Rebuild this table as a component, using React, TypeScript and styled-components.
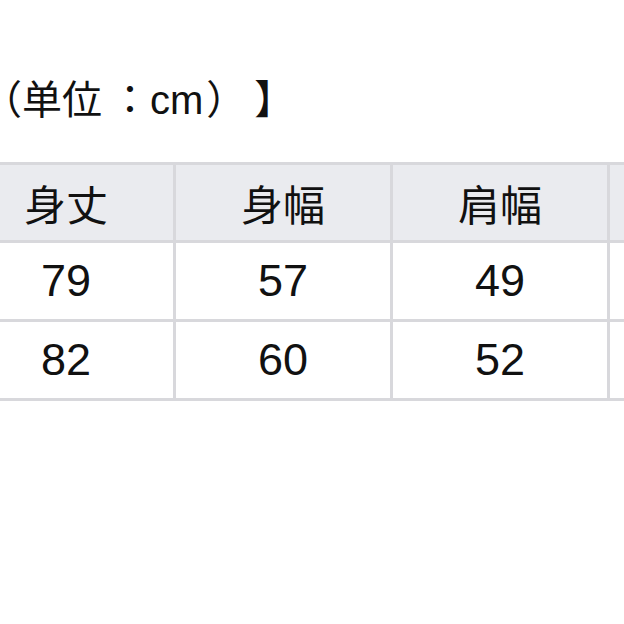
import React from 'react'
import styled, { createGlobalStyle } from 'styled-components'

const GlobalStyle = createGlobalStyle`
  html, body {
    margin: 0;
    padding: 0;
    background: #ffffff;
    overflow: hidden;
  }
  body {
    width: 624px;
    height: 624px;
    font-family: "Liberation Sans", "Noto Sans CJK SC", sans-serif;
    color: #111111;
  }
`

const Page = styled.div`
  display: flex;
  flex-direction: column;
  padding-top: 76px;
  margin-left: -44px;
`

const Caption = styled.div`
  font-family: "Liberation Sans", "Noto Sans CJK JP", sans-serif;
  font-size: 40px;
  line-height: 48px;
  margin-left: 26px;
  white-space: nowrap;
  margin-bottom: 38px;
`

const Punct = styled.span<{ $before?: number }>`
  display: inline-block;
  margin-left: ${(p) => p.$before ?? 0}px;
`

const Table = styled.table`
  border-collapse: collapse;
  table-layout: fixed;
  width: 868px;
`

const HeadCell = styled.th`
  background: #eaebef;
  font-weight: 400;
  font-size: 42px;
  height: 75px;
  padding: 0;
  border: 3px solid #d8d8dc;
  text-align: center;
  font-family: "Noto Sans CJK SC", sans-serif;
`

const Cell = styled.td`
  font-size: 45px;
  height: 76px;
  padding: 0;
  border: 3px solid #d8d8dc;
  text-align: center;
  background: #ffffff;
`

const heads = ['身丈', '身幅', '肩幅', '袖丈']
const rows = [
  ['79', '57', '49', '60'],
  ['82', '60', '52', '61'],
]

export default function App() {
  return (
    <>
      <GlobalStyle />
      <Page>
        <Caption>
          （单位<Punct $before={8}>：</Punct>cm<Punct $before={3}>）</Punct>
          <Punct $before={8}>】</Punct>
        </Caption>
        <Table>
          <colgroup>
            {heads.map((h) => (
              <col key={h} style={{ width: 217 }} />
            ))}
          </colgroup>
          <thead>
            <tr>
              {heads.map((h) => (
                <HeadCell key={h}>{h}</HeadCell>
              ))}
            </tr>
          </thead>
          <tbody>
            {rows.map((r, i) => (
              <tr key={i}>
                {r.map((v, j) => (
                  <Cell key={j}>{v}</Cell>
                ))}
              </tr>
            ))}
          </tbody>
        </Table>
      </Page>
    </>
  )
}
